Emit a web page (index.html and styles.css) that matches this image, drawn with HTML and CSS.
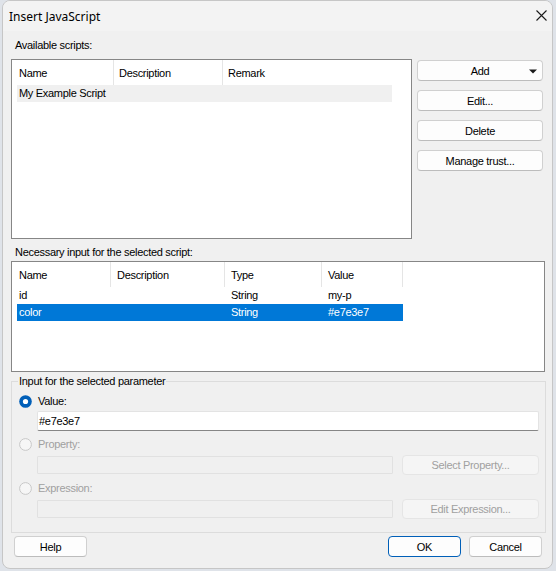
FILE: index.html
```html
<!DOCTYPE html>
<html>
<head>
<meta charset="utf-8">
<link rel="stylesheet" href="styles.css">
</head>
<body>
<div class="window">
  <div class="titlebar">
    <span class="title">Insert JavaScript</span>
    <svg class="close" width="11" height="11" viewBox="0 0 11 11"><path d="M0.5 0.5 L10.5 10.5 M10.5 0.5 L0.5 10.5" stroke="#1a1a1a" stroke-width="1.1" fill="none"/></svg>
  </div>
  <div class="content">
    <div class="label l1">Available scripts:</div>
    <div class="row1">
      <div class="list list1">
        <div class="lv-head">
          <div class="hc c1-1 first">Name</div>
          <div class="hc c1-2">Description</div>
          <div class="hc c1-3">Remark</div>
        </div>
        <div class="lv-row inactive">
          <div class="rc c1-1 first">My Example Script</div>
          <div class="rc c1-2"></div>
          <div class="rc c1-3"></div>
        </div>
      </div>
      <div class="side">
        <button class="btn side-btn add">Add<svg class="arrow" width="8" height="5" viewBox="0 0 8 5"><path d="M0 0.5 H8 L4 4.5 Z" fill="#1a1a1a"/></svg></button>
        <button class="btn side-btn">Edit...</button>
        <button class="btn side-btn">Delete</button>
        <button class="btn side-btn">Manage trust...</button>
      </div>
    </div>
    <div class="label l2">Necessary input for the selected script:</div>
    <div class="list list2">
      <div class="lv-head">
        <div class="hc c2-1 first">Name</div>
        <div class="hc c2-2">Description</div>
        <div class="hc c2-3">Type</div>
        <div class="hc c2-4 last">Value</div>
      </div>
      <div class="lv-row">
        <div class="rc c2-1 first">id</div>
        <div class="rc c2-2"></div>
        <div class="rc c2-3">String</div>
        <div class="rc c2-4 last">my-p</div>
      </div>
      <div class="lv-row selected">
        <div class="rc c2-1 first">color</div>
        <div class="rc c2-2"></div>
        <div class="rc c2-3">String</div>
        <div class="rc c2-4 last">#e7e3e7</div>
      </div>
    </div>
    <div class="group">
      <div class="group-title">Input for the selected parameter</div>
      <div class="radio-row">
        <svg class="radio" width="13" height="13" viewBox="0 0 13 13"><circle cx="6.5" cy="6.5" r="6.3" fill="#005fb8"/><circle cx="6.5" cy="6.5" r="2.6" fill="#fff"/></svg>
        <span>Value:</span>
      </div>
      <div class="text-input value-input">#e7e3e7</div>
      <div class="radio-row disabled">
        <svg class="radio" width="13" height="13" viewBox="0 0 13 13"><circle cx="6.5" cy="6.5" r="5.9" fill="#f6f6f6" stroke="#c8c8c8" stroke-width="1"/></svg>
        <span>Property:</span>
      </div>
      <div class="field-row">
        <div class="text-input dis-input"></div>
        <button class="btn dis-btn">Select Property...</button>
      </div>
      <div class="radio-row disabled">
        <svg class="radio" width="13" height="13" viewBox="0 0 13 13"><circle cx="6.5" cy="6.5" r="5.9" fill="#f6f6f6" stroke="#c8c8c8" stroke-width="1"/></svg>
        <span>Expression:</span>
      </div>
      <div class="field-row">
        <div class="text-input dis-input"></div>
        <button class="btn dis-btn">Edit Expression...</button>
      </div>
    </div>
    <div class="footer">
      <button class="btn foot-btn help">Help</button>
      <button class="btn foot-btn ok">OK</button>
      <button class="btn foot-btn cancel">Cancel</button>
    </div>
  </div>
</div>
</body>
</html>
```

FILE: styles.css
```css
* { box-sizing: border-box; }
html, body { margin: 0; padding: 0; }
body {
  background: #dfe3e9;
  width: 556px;
  height: 571px;
  overflow: hidden;
  font-family: "Liberation Sans", Arial, sans-serif;
  font-size: 11px;
  letter-spacing: -0.3px;
  color: #000;
}
.window {
  margin-left: 2px;
  width: 551px;
  height: 569px;
  background: #f0f0f0;
  border: 1px solid #c6c6c6;
  border-radius: 8px;
  overflow: hidden;
  display: flex;
  flex-direction: column;
}
.titlebar {
  height: 30px;
  flex: none;
  background: #f3f3f3;
  display: flex;
  align-items: center;
  padding: 0 5px 0 6px;
}
.title {
  font-family: "Noto Sans", "Open Sans", sans-serif;
  font-size: 12px;
  letter-spacing: 0;
  line-height: 16px;
  margin-top: 1px;
}
.close {
  margin-left: auto;
  align-self: flex-start;
  margin-top: 9px;
  display: block;
}
.content {
  padding: 8px 8px 0 8px;
  display: flex;
  flex-direction: column;
  flex: 1;
}
.label { line-height: 13px; margin-left: 4px; }
.l1 { margin-bottom: 7px; }
.l2 { margin-top: 7px; margin-bottom: 2px; }
.row1 { display: flex; gap: 5px; height: 180px; }
.list {
  background: #fff;
  border: 1px solid #868686;
  padding-left: 5px;
}
.list1 { width: 401px; height: 180px; }
.list2 { width: 534px; height: 111px; }
.lv-head { display: flex; height: 25px; }
.lv-row { display: flex; height: 17px; }
.hc, .rc {
  white-space: nowrap;
  overflow: hidden;
  padding-left: 5px;
  border-left: 1px solid transparent;
}
.hc { line-height: 26px; border-left-color: #e5e5e5; }
.rc { line-height: 17px; }
.hc.first, .rc.first { border-left: none; padding-left: 2px; }
.hc.last { border-right: 1px solid #e5e5e5; }
.rc.last { border-right: 1px solid transparent; }
.c1-1 { width: 96px; }
.c1-2 { width: 109px; }
.c1-3 { width: 170px; }
.c2-1 { width: 93px; }
.c2-2 { width: 114px; padding-left: 6px; }
.c2-3 { width: 97px; padding-left: 6px; }
.c2-4 { width: 82px; padding-left: 6px; }
.lv-row.inactive { background: #f0f0f0; width: 375px; }
.lv-row.selected { background: #0078d7; color: #fff; width: 386px; }
.side {
  display: flex;
  flex-direction: column;
  gap: 9px;
  margin-top: 1px;
}
.btn {
  font-family: inherit;
  font-size: 11px;
  letter-spacing: -0.3px;
  color: #000;
  background: #fdfdfd;
  border: 1px solid #d0d0d0;
  border-bottom-color: #bcbcbc;
  border-radius: 4px;
  display: flex;
  align-items: center;
  justify-content: center;
  padding: 0;
  margin: 0;
}
.side-btn { width: 126px; height: 21px; }
.add { position: relative; }
.arrow { position: absolute; right: 5px; top: 8px; }
.group {
  margin-top: 9px;
  width: 535px;
  border: 1px solid #dcdcdc;
  padding-bottom: 13px;
  display: flex;
  flex-direction: column;
}
.group-title {
  align-self: flex-start;
  margin-top: -7px;
  margin-left: 6px;
  padding: 0 1px;
  background: #f0f0f0;
  line-height: 13px;
}
.radio-row {
  display: flex;
  align-items: center;
  gap: 6px;
  height: 13px;
  margin-top: 7px;
  margin-left: 7px;
  line-height: 13px;
}
.radio { display: block; flex: none; }
.radio-row.disabled { color: #a0a0a0; }
.text-input {
  background: #fff;
  border: 1px solid #e3e3e3;
  border-bottom-color: #868686;
  border-radius: 2px;
  padding-left: 1px;
}
.value-input {
  margin-left: 25px;
  margin-top: 3px;
  width: 502px;
  height: 20px;
  line-height: 18px;
}
.field-row {
  display: flex;
  align-items: center;
  gap: 9px;
  margin-left: 25px;
  margin-top: 4px;
  height: 20px;
}
.dis-input {
  width: 356px;
  height: 18px;
  background: #f0f0f0;
  border: 1px solid #e1e1e1;
  border-radius: 1px;
}
.dis-btn {
  width: 137px;
  height: 20px;
  background: #f5f5f5;
  border: 1px solid #e5e5e5;
  color: #a0a0a0;
}
.footer {
  display: flex;
  margin-top: 3px;
  height: 21px;
}
.foot-btn { width: 73px; height: 21px; }
.help { margin-left: 3px; }
.ok { margin-left: auto; border: 1px solid #005fb8; }
.cancel { margin-left: 8px; margin-right: 2px; }
```
